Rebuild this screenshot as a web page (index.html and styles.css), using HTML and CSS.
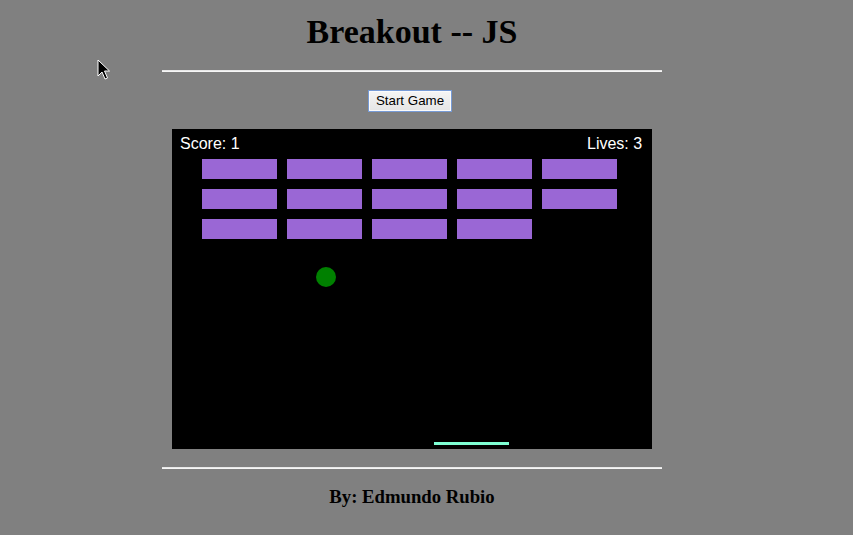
FILE: index.html
```html
<!DOCTYPE html>
<html lang="en">
<head>
<meta charset="utf-8">
<title>Breakout -- JS</title>
<link rel="stylesheet" href="styles.css">
</head>
<body>
<main class="page">
  <h1 class="title">Breakout -- JS</h1>
  <hr class="rule rule-top">
  <button class="start-btn" type="button">Start Game</button>
  <svg class="board" width="480" height="320" viewBox="0 0 480 320" xmlns="http://www.w3.org/2000/svg">
    <rect width="480" height="320" fill="#000"/>
    <g fill="#9a67d5">
      <rect x="30" y="30" width="75" height="20"/>
      <rect x="115" y="30" width="75" height="20"/>
      <rect x="200" y="30" width="75" height="20"/>
      <rect x="285" y="30" width="75" height="20"/>
      <rect x="370" y="30" width="75" height="20"/>
      <rect x="30" y="60" width="75" height="20"/>
      <rect x="115" y="60" width="75" height="20"/>
      <rect x="200" y="60" width="75" height="20"/>
      <rect x="285" y="60" width="75" height="20"/>
      <rect x="370" y="60" width="75" height="20"/>
      <rect x="30" y="90" width="75" height="20"/>
      <rect x="115" y="90" width="75" height="20"/>
      <rect x="200" y="90" width="75" height="20"/>
      <rect x="285" y="90" width="75" height="20"/>
    </g>
    <circle cx="154" cy="148" r="10" fill="#008000"/>
    <rect x="262" y="313" width="75" height="3" fill="#7fffd4"/>
    <text class="hud" x="8" y="20">Score: 1</text>
    <text class="hud" x="415" y="20">Lives: 3</text>
  </svg>
  <hr class="rule rule-bottom">
  <h3 class="credit">By: Edmundo Rubio</h3>
</main>
<svg class="cursor" width="14" height="22" viewBox="0 0 14 22" xmlns="http://www.w3.org/2000/svg">
  <path d="M1 1 L1 17 L5 13 L8 20 L10.5 19 L7.5 12 L12.5 12 Z" fill="#000" stroke="#fff" stroke-width="1" stroke-linejoin="miter"/>
</svg>
</body>
</html>
```

FILE: styles.css
```css
html, body {
  margin: 0;
  padding: 0;
}

body {
  background: #808080;
  font-family: "Liberation Serif", "Times New Roman", serif;
  width: 853px;
  height: 535px;
  overflow: hidden;
}

.page {
  width: 500px;
  margin-left: 162px;
  display: flex;
  flex-direction: column;
  align-items: center;
}

.title {
  margin: 13px 0 0;
  font-size: 34px;
  line-height: 37px;
  font-weight: bold;
  color: #000;
}

.rule {
  width: 500px;
  height: 0;
  margin: 0;
  border: none;
  border-top: 1px solid #e8e8e8;
  border-bottom: 1px solid #f6f6f6;
}

.rule-top {
  margin-top: 20px;
}

.start-btn {
  margin-top: 18px;
  margin-right: 4px;
  box-sizing: border-box;
  width: 84px;
  height: 22px;
  padding: 0;
  font-family: "Liberation Sans", Arial, sans-serif;
  font-size: 13.33px;
  line-height: 18px;
  color: #000;
  background: linear-gradient(#f5f5f5, #e5e5e5);
  border: 1px solid #779bd6;
  box-shadow: inset 0 0 0 1px #fbfbfb;
  border-radius: 0;
}

.board {
  display: block;
  margin-top: 17px;
}

.hud {
  font-family: "Liberation Sans", Arial, sans-serif;
  font-size: 16px;
  fill: #fff;
}

.rule-bottom {
  margin-top: 18px;
}

.credit {
  margin: 17px 0 0;
  font-size: 18.72px;
  line-height: 22px;
  font-weight: bold;
  color: #000;
}

.cursor {
  position: absolute;
  left: 97px;
  top: 59px;
}
```
